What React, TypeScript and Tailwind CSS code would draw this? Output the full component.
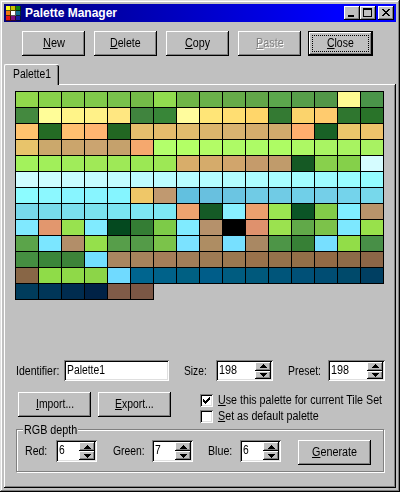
import { useLayoutEffect, useRef, type ReactNode } from "react";

const ROWS: string[] = [
  "91d84c 88d24b 82ca4a 80c94b 79c24c 74bb48 91dc4f 6fb548 6bb14a 66ab49 62a649 5ba74c 579e4a 529748 fffa92 4a9449",
  "44893f fffd98 fff488 fff188 ffe781 40843e 388638 fffc9d ffe577 ffde72 ffd66a 347a33 fbd36c ffcb6e 2f762f 297329",
  "ffc36e 246b24 ffbf70 ffb571 226622 e6be6d e6bb6c e1bb6d dcb56c d9b370 d5ad6c d1ab6c ffae6e 196126 ebc76b eec36b",
  "e8c46b cba86c cba56c cba470 c5a16c f5a86e b3ff6b b3ff66 b3fc66 aefa66 adfb66 aefc64 adf864 a9f463 a8f361 a8f262",
  "a3f25c a1ef5a a0ec5a a0e957 9ee957 9be854 9de855 d8ad6a d5ab6b d1a56c c59b6b c09b6b 155924 88d04c 85d04a d5fcff",
  "cffdff ccfdff c8fcff c5fcff c2fdff befcff bbfdff b8fdff b5fdff b2fdff adfdff a8fdff a2fdff 9efcff 99fdff 94fcff",
  "8cfcff 8cf8ff 88f5ff 88f5ff 85f5ff efc768 c09970 62c0df 68c0df 6bc5e2 70cbe5 70cbe5 70cfe8 74cfe8 74d3eb 77d8eb",
  "77d9eb 77dceb 7adfee 7ae2ee 7ae4f1 7de6f3 7de8f4 eea36f 155a26 88f0ff eba06e 9be551 0b5426 82cb48 80eeff b8946b",
  "80e9ff e2976e 98e24f 80ebff 04491f 347d34 7dcb48 80ebff b5916b 000000 df916d 9be24f 61a949 7cc24a 7de8ff 98e14b",
  "5ba44a 7be6ff b28e69 95e04b 579e4a 549b48 7bc34a 7be2ff ae8d63 77e0ff a98863 4d9547 378036 77dfff 92dd48 488f47",
  "458e41 3b863a 3d8339 72dfff a98660 a6835c a57e59 a17e59 9e7b54 9b7850 9a724b 95724b 926f48 926a45 8d6b48 8c6647",
  "886646 8fdc48 8fd948 8cd548 70daff 00658f 00628a 006083 005d89 005c80 00597c 00557a 005077 004d73 004a6b 003f62",
  "003c5c 003658 002c4f 002246 805b48 7b5745",
];

/* A label condensed to an exact pixel width; `hot` underlines the first letter. */
function Label({ text, w, hot = false, className = "" }: { text: string; w: number; hot?: boolean; className?: string }) {
  const ref = useRef<HTMLSpanElement>(null);
  useLayoutEffect(() => {
    const el = ref.current;
    if (el) el.style.transform = `scaleX(${w / el.offsetWidth})`;
  }, [text, w]);
  return (
    <span className={`block h-[14px] shrink-0 leading-[14px] whitespace-nowrap ${className}`} style={{ width: w }}>
      <span ref={ref} className="inline-block origin-left">
        {hot ? (
          <>
            <span className="underline decoration-1 underline-offset-1 [text-decoration-skip-ink:none]">{text[0]}</span>
            {text.slice(1)}
          </>
        ) : (
          text
        )}
      </span>
    </span>
  );
}

const RAISED = "bg-[#c0c0c0] shadow-[inset_-1px_-1px_#000,inset_1px_1px_#fff,inset_-2px_-2px_#808080]";
const SUNKEN =
  "bg-white shadow-[inset_1px_1px_#808080,inset_-1px_-1px_#fff,inset_2px_2px_#000,inset_-2px_-2px_#dfdfdf]";

function Button({ text, w, className = "w-[73px]" }: { text: string; w: number; className?: string }) {
  return (
    <button className={`flex h-[25px] shrink-0 items-center justify-center pb-px ${RAISED} ${className}`}>
      <Label text={text} w={w} hot />
    </button>
  );
}

function Arrow({ up = false }: { up?: boolean }) {
  return (
    <button className={`flex flex-1 items-center justify-center ${RAISED}`}>
      <svg width="7" height="4" viewBox="0 0 7 4" shapeRendering="crispEdges">
        <path d={up ? "M3 0h1v1h1v1h1v1h1v1H0V3h1V2h1V1h1z" : "M0 0h7v1H6v1H5v1H4v1H3V3H2V2H1V1H0z"} />
      </svg>
    </button>
  );
}

function Spin({ value, w, className }: { value: string; w: number; className: string }) {
  return (
    <div className={`flex shrink-0 justify-between p-[2px] ${SUNKEN} ${className}`}>
      <Label text={value} w={w} className="ml-[1px] mt-[1px]" />
      <div className="flex w-[16px] flex-col">
        <Arrow up />
        <Arrow />
      </div>
    </div>
  );
}

function Check({ text, w, checked = false }: { text: string; w: number; checked?: boolean }) {
  return (
    <label className="flex h-[13px] items-center">
      <span className={`mr-[5px] size-[13px] shrink-0 ${SUNKEN}`}>
        {checked && (
          <svg width="13" height="13" viewBox="0 0 13 13" shapeRendering="crispEdges">
            <path d="M3 5h1v1h1v1h1V6h1V5h1V4h1V3h1v3H9v1H8v1H7v1H6v1H5V9H4V8H3z" />
          </svg>
        )}
      </span>
      <Label text={text} w={w} hot className="-mt-px" />
    </label>
  );
}

const ICON = [
  "bg-[#f8f820]", "bg-[#c8c000]", "bg-[#108010]",
  "bg-[#f07810]", "bg-white", "bg-[#107090]",
  "bg-[#e01818]", "bg-[#801080]", "bg-[#1820a0]",
];

function CaptionButton({ children, className = "" }: { children: ReactNode; className?: string }) {
  return <button className={`h-[14px] w-[16px] ${RAISED} ${className}`}>{children}</button>;
}

export default function App() {
  return (
    <div className="flex h-[492px] w-[400px] flex-col bg-[#c0c0c0] p-[4px] font-['Liberation_Sans',Arial,sans-serif] text-[12px] text-black shadow-[inset_-1px_-1px_#000,inset_1px_1px_#dfdfdf,inset_-2px_-2px_#808080,inset_2px_2px_#fff]">
      <header className="flex h-[18px] shrink-0 items-center bg-linear-to-r from-[#000080] to-[#0000ff] to-85% pl-[2px] pr-[2px]">
        <div className="grid size-[15px] grid-cols-[repeat(3,5px)] grid-rows-[repeat(3,5px)]">
          {ICON.map((c) => (
            <span key={c} className={`shadow-[inset_-1px_-1px_rgba(0,0,0,0.65)] ${c}`} />
          ))}
        </div>
        <Label text="Palette Manager" w={92} className="ml-[4px] font-bold text-white" />
        <div className="ml-auto flex">
          <CaptionButton>
            <svg width="16" height="14" shapeRendering="crispEdges"><path d="M4 9h6v2H4z" /></svg>
          </CaptionButton>
          <CaptionButton>
            <svg width="16" height="14" shapeRendering="crispEdges"><path fillRule="evenodd" d="M3 2h9v9H3zM4 4v6h7V4z" /></svg>
          </CaptionButton>
          <CaptionButton className="ml-[2px]">
            <svg width="16" height="14" shapeRendering="crispEdges">
              <path d="M4 3h2v1h1v1h2V4h1V3h2v1h-1v1h-1v1H9v1h1v1h1v1h1v1h-2V9H9V8H7v1H6v1H4V9h1V8h1V7h1V6H6V5H5V4H4z" />
            </svg>
          </CaptionButton>
        </div>
      </header>

      <div className="mt-[9px] flex shrink-0 gap-[9px] pl-[18px]">
        <Button text="New" w={22} className="w-[63px]" />
        <Button text="Delete" w={31} className="w-[63px]" />
        <Button text="Copy" w={25} className="w-[63px]" />
        <Button text="Paste" w={28} className="w-[63px] text-[#808080] [text-shadow:1px_1px_#fff]" />
        <div className="-ml-[2px] w-[65px] bg-black p-[1px]">
          <button className="flex h-[23px] w-full items-center justify-center bg-[#c0c0c0] p-[3px] shadow-[inset_-1px_-1px_#000,inset_1px_1px_#fff,inset_-2px_-2px_#808080]">
            <span className="flex h-full w-full items-center justify-center border border-dotted border-black pb-px">
              <Label text="Close" w={27} hot />
            </span>
          </button>
        </div>
      </div>

      <div className="z-10 -mb-px mt-[8px] flex h-[21px] w-[55px] shrink-0 rounded-t-[2px] border-l border-t border-white bg-[#c0c0c0] pl-[8px] pt-[2px] shadow-[inset_-1px_0_#000,inset_-2px_0_#808080]">
        <Label text="Palette1" w={38} />
      </div>

      <main className="flex h-[404px] w-[392px] flex-col bg-[#c0c0c0] px-[11px] pt-[7px] shadow-[inset_-1px_-1px_#000,inset_1px_1px_#fff,inset_-2px_-2px_#808080]">
        <div className="h-[209px] w-[369px] shrink-0">
          {ROWS.map((row, r) => (
            <div key={r} className="flex h-[16px]">
              {row.split(" ").map((c, i) => (
                <span
                  key={i}
                  className="-mr-px h-[17px] w-[24px] shrink-0 border border-black"
                  style={{ backgroundColor: `#${c}` }}
                />
              ))}
            </div>
          ))}
        </div>

        <div className="mt-[60px] flex h-[21px] shrink-0">
          <Label text="Identifier:" w={43} className="ml-[1px] mt-[4px]" />
          <div className={`ml-[5px] h-[21px] w-[105px] pl-[3px] pt-[3px] ${SUNKEN}`}>
            <Label text="Palette1" w={38} />
          </div>
          <Label text="Size:" w={23} className="ml-[15px] mt-[4px]" />
          <Spin value="198" w={18} className="ml-[9px] h-[21px] w-[57px]" />
          <Label text="Preset:" w={33} className="ml-[15px] mt-[4px]" />
          <Spin value="198" w={18} className="ml-[7px] h-[21px] w-[57px]" />
        </div>

        <div className="mt-[11px] flex h-[31px] shrink-0 pl-[3px]">
          <Button text="Import..." w={38} />
          <Button text="Export..." w={39} className="ml-[7px] w-[73px]" />
          <div className="ml-[29px] flex flex-col gap-[3px] pt-[2px]">
            <Check text="Use this palette for current Tile Set" w={164} checked />
            <Check text="Set as default palette" w={101} />
          </div>
        </div>

        <section className="relative ml-[1px] mt-[6px] flex h-[43px] w-[368px] shrink-0 border border-[#808080] pl-[8px] pt-[10px] shadow-[1px_1px_#fff,inset_1px_1px_#fff]">
          <div className="absolute -top-[7px] left-[6px] bg-[#c0c0c0] px-[1px]">
            <Label text="RGB depth" w={53} />
          </div>
          <Label text="Red:" w={22} className="mt-[4px]" />
          <Spin value="6" w={6} className="ml-[9px] h-[22px] w-[41px]" />
          <Label text="Green:" w={32} className="ml-[16px] mt-[4px]" />
          <Spin value="7" w={6} className="ml-[7px] h-[22px] w-[41px]" />
          <Label text="Blue:" w={24} className="ml-[15px] mt-[4px]" />
          <Spin value="6" w={6} className="ml-[8px] h-[22px] w-[41px]" />
          <Button text="Generate" w={45} className="ml-[17px] w-[73px]" />
        </section>
      </main>
    </div>
  );
}
